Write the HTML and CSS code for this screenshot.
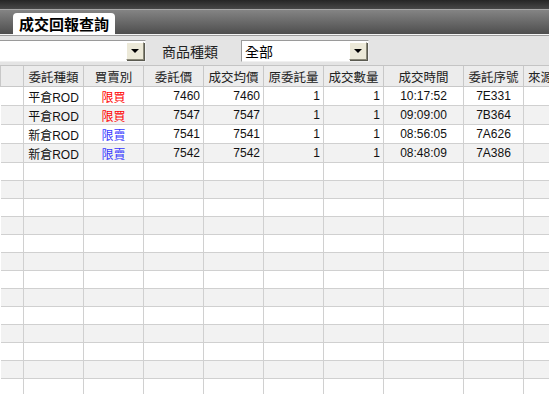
FILE: index.html
```html
<!DOCTYPE html>
<html lang="zh-Hant">
<head>
    <meta charset="UTF-8">
    <title>成交回報查詢</title>
    <link rel="stylesheet" href="styles.css">
</head>
<body>
    <div class="titlebar">
        <div class="tab">成交回報查詢</div>
    </div>

    <div class="filter">
        <div class="select select-account">
            <span class="select-text"></span>
            <span class="select-btn"></span>
        </div>
        <span class="filter-label">商品種類</span>
        <div class="select select-kind">
            <span class="select-text">全部</span>
            <span class="select-btn"></span>
        </div>
    </div>

    <table class="grid">
        <colgroup>
            <col class="c-first">
            <col class="c-60"><col class="c-60"><col class="c-60"><col class="c-60">
            <col class="c-60"><col class="c-60">
            <col class="c-80">
            <col class="c-60"><col class="c-60">
        </colgroup>
        <thead>
            <tr>
                <th></th>
                <th>委託種類</th>
                <th>買賣別</th>
                <th>委託價</th>
                <th>成交均價</th>
                <th>原委託量</th>
                <th>成交數量</th>
                <th>成交時間</th>
                <th>委託序號</th>
                <th class="last">來源</th>
            </tr>
        </thead>
        <tbody>
            <tr class="data">
                <td></td><td class="center">平倉ROD</td><td class="center buy">限買</td>
                <td class="num">7460</td><td class="num">7460</td><td class="num">1</td><td class="num">1</td>
                <td class="center">10:17:52</td><td class="center">7E331</td><td class="center">E</td>
            </tr>
            <tr class="data">
                <td></td><td class="center">平倉ROD</td><td class="center buy">限買</td>
                <td class="num">7547</td><td class="num">7547</td><td class="num">1</td><td class="num">1</td>
                <td class="center">09:09:00</td><td class="center">7B364</td><td class="center">E</td>
            </tr>
            <tr class="data">
                <td></td><td class="center">新倉ROD</td><td class="center sell">限賣</td>
                <td class="num">7541</td><td class="num">7541</td><td class="num">1</td><td class="num">1</td>
                <td class="center">08:56:05</td><td class="center">7A626</td><td class="center">E</td>
            </tr>
            <tr class="data">
                <td></td><td class="center">新倉ROD</td><td class="center sell">限賣</td>
                <td class="num">7542</td><td class="num">7542</td><td class="num">1</td><td class="num">1</td>
                <td class="center">08:48:09</td><td class="center">7A386</td><td class="center">E</td>
            </tr>
            <tr><td></td><td></td><td></td><td></td><td></td><td></td><td></td><td></td><td></td><td></td></tr>
            <tr><td></td><td></td><td></td><td></td><td></td><td></td><td></td><td></td><td></td><td></td></tr>
            <tr><td></td><td></td><td></td><td></td><td></td><td></td><td></td><td></td><td></td><td></td></tr>
            <tr><td></td><td></td><td></td><td></td><td></td><td></td><td></td><td></td><td></td><td></td></tr>
            <tr><td></td><td></td><td></td><td></td><td></td><td></td><td></td><td></td><td></td><td></td></tr>
            <tr><td></td><td></td><td></td><td></td><td></td><td></td><td></td><td></td><td></td><td></td></tr>
            <tr><td></td><td></td><td></td><td></td><td></td><td></td><td></td><td></td><td></td><td></td></tr>
            <tr><td></td><td></td><td></td><td></td><td></td><td></td><td></td><td></td><td></td><td></td></tr>
            <tr><td></td><td></td><td></td><td></td><td></td><td></td><td></td><td></td><td></td><td></td></tr>
            <tr><td></td><td></td><td></td><td></td><td></td><td></td><td></td><td></td><td></td><td></td></tr>
            <tr><td></td><td></td><td></td><td></td><td></td><td></td><td></td><td></td><td></td><td></td></tr>
            <tr><td></td><td></td><td></td><td></td><td></td><td></td><td></td><td></td><td></td><td></td></tr>
            <tr><td></td><td></td><td></td><td></td><td></td><td></td><td></td><td></td><td></td><td></td></tr>
            <tr><td></td><td></td><td></td><td></td><td></td><td></td><td></td><td></td><td></td><td></td></tr>
        </tbody>
    </table>
</body>
</html>
```

FILE: styles.css
```css
/* Basic styling */
body {
    margin: 0;
    padding: 0;
    width: 549px;
    height: 394px;
    overflow: hidden;
    background-color: #fff;
    font-family: "Liberation Sans", "Noto Sans CJK TC", sans-serif;
    color: #000;
}

/* top bar with the tab */
.titlebar {
    height: 36px;
    padding-left: 13px;
    display: flex;
    align-items: flex-end;
    box-sizing: border-box;
    padding-bottom: 1px;
    background: linear-gradient(to bottom,
        #262626 0, #484848 9px,
        #a8a8a8 9px, #a8a8a8 10px,
        #848484 10px, #4e4e4e 34px,
        #f4f4f4 34px, #f4f4f4 35px,
        #9c9c9c 35px, #9c9c9c 36px);
}

.tab {
    height: 22px;
    width: 102px;
    box-sizing: border-box;
    padding-left: 6px;
    background-color: #fff;
    border-radius: 4px 4px 0 0;
    font-family: "Noto Sans CJK TC", sans-serif;
    font-weight: bold;
    font-size: 15px;
    line-height: 22px;
    color: #000;
}

/* filter row */
.filter {
    height: 30px;
    display: flex;
    align-items: center;
    background-color: #e4e4e4;
    border-bottom: 1px solid #c4c4c4;
    box-sizing: border-box;
}

.select {
    height: 22px;
    box-sizing: border-box;
    display: flex;
    align-items: center;
    justify-content: space-between;
    background-color: #fff;
    border-top: 1px solid #9a9a9a;
    border-left: 1px solid #9a9a9a;
    border-right: 1px solid #f0f0f0;
    border-bottom: 1px solid #f0f0f0;
    padding: 0 1px 0 3px;
}

.select-account {
    width: 146px;
    border-left: none;
}

.select-kind {
    width: 128px;
    margin-left: 23px;
}

.select-text {
    font-family: "Noto Sans CJK TC", sans-serif;
    font-size: 14px;
    line-height: 18px;
    color: #000;
}

.select-btn {
    position: relative;
    width: 18px;
    height: 18px;
    box-sizing: border-box;
    background-color: #ece9d8;
    border-top: 1px solid #fff;
    border-left: 1px solid #fff;
    border-right: 1px solid #8a8878;
    border-bottom: 1px solid #8a8878;
    box-shadow: 1px 1px 0 #5a5a50;
}

/* triangle on the dropdown button */
.select-btn::after {
    content: "";
    position: absolute;
    left: 4px;
    top: 6px;
    border-left: 4px solid transparent;
    border-right: 4px solid transparent;
    border-top: 4px solid #000;
}

.filter-label {
    margin-left: 16px;
    font-family: "Noto Sans CJK TC", sans-serif;
    font-size: 14px;
    color: #222;
}

/* grid */
.grid {
    border-collapse: collapse;
    table-layout: fixed;
    width: 583px;
    font-size: 12px;
}

.c-first { width: 23px; }
.c-60 { width: 60px; }
.c-80 { width: 80px; }

.grid th {
    height: 20px;
    padding: 0;
    background-color: #ececec;
    border: 1px solid #c8c8c8;
    border-top: none;
    font-family: "Noto Sans CJK TC", sans-serif;
    font-weight: normal;
    font-size: 12.5px;
    color: #222;
    text-align: center;
    white-space: nowrap;
    overflow: hidden;
}

.grid th.last {
    text-align: left;
    padding-left: 4px;
}

.grid td {
    height: 17px;
    padding: 0 3px;
    border: 1px solid #d0d0d0;
    white-space: nowrap;
    overflow: hidden;
    color: #111;
}

.grid tr.data td {
    height: 18px;
}

.grid tbody tr:nth-child(even) td {
    background-color: #f2f2f2;
}

.grid td:first-child {
    border-left: none;
}

.grid .center {
    text-align: center;
    font-family: "Liberation Sans", "Noto Sans CJK TC", sans-serif;
}

.grid .num {
    text-align: right;
}

.grid .buy {
    color: #ff0000;
    font-family: "Noto Sans CJK TC", sans-serif;
}

.grid .sell {
    color: #3838ff;
    font-family: "Noto Sans CJK TC", sans-serif;
}
```
